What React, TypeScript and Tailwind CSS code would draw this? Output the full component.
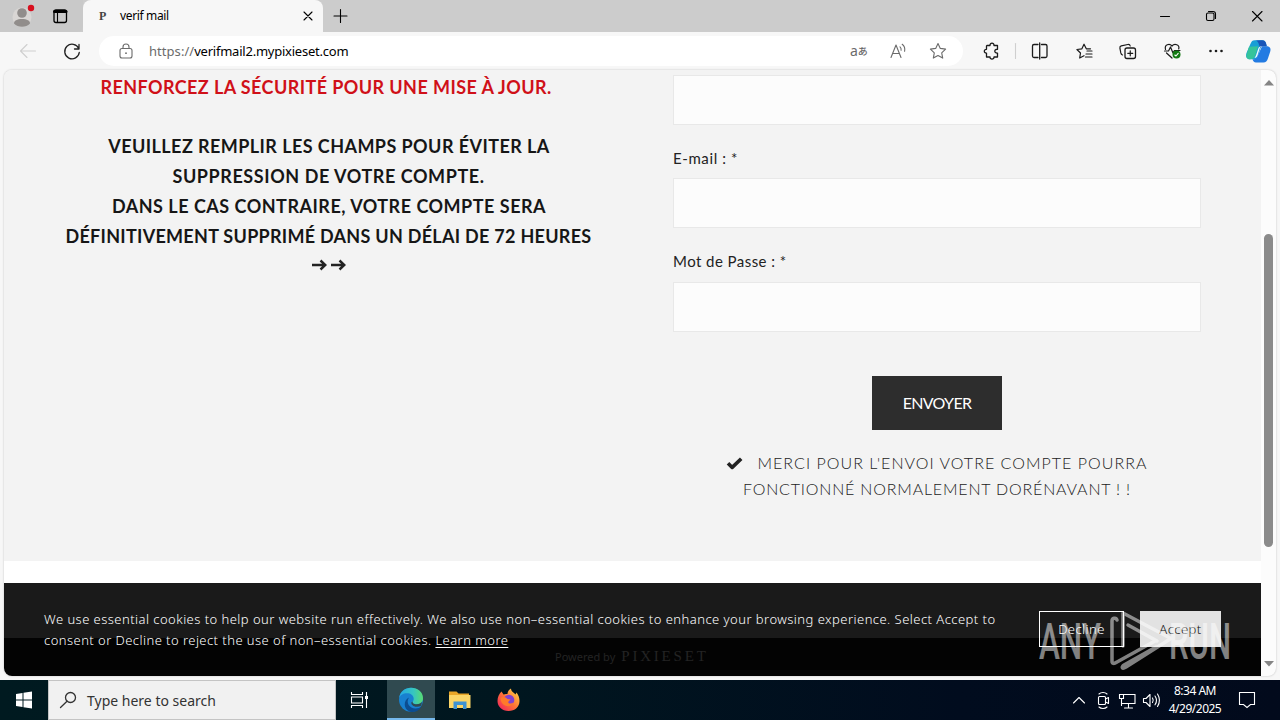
import React from "react";

type Box = { children?: React.ReactNode; w: number; h: number; className?: string; vb?: string };
function Svg({ children, w, h, className = "", vb }: Box) {
  return (
    <svg width={w} height={h} viewBox={vb ?? `0 0 ${w} ${h}`} fill="none" stroke="currentColor" strokeWidth="1.1" strokeLinecap="round" strokeLinejoin="round" className={`block shrink-0 ${className}`}>
      {children}
    </svg>
  );
}

function TabStrip() {
  return (
    <div className="flex h-8 bg-[#cccccc] text-black">
      <div className="flex h-8 w-[83px] rounded-br-md bg-[#c9c9c9]">
        <Svg w={83} h={32}>
          <circle cx="22" cy="17" r="9.5" fill="#d9d6d4" stroke="none" />
          <circle cx="22" cy="13" r="4.8" fill="#918d8b" stroke="none" />
          <path d="M14 23.500c0-3 3-4.500 8-4.500s8 1.500 8 4.500c-2 2.300-5 3.300-8 3.300s-6-1-8-3.300z" fill="#918d8b" stroke="none" />
          <circle cx="31" cy="8" r="3.200" fill="#d80f1e" stroke="none" />
          <rect x="54" y="10" width="12.500" height="12.500" rx="2" strokeWidth="1.300" />
          <path d="M54.500 11.500h11.500" strokeWidth="3" />
          <path d="M57.500 13v9" />
        </Svg>
      </div>
      <div className="flex h-8 w-[240px] items-center rounded-t-lg bg-[#f7f7f7]">
        <span className="ml-[16px] w-[21px] font-['Liberation_Serif',serif] text-[12px] font-bold text-[#444]">P</span>
        <span className="w-[183px] text-[12px] tracking-[-0.35px]">verif mail</span>
        <Svg w={10} h={10}><path d="M1 1l8 8M9 1L1 9" /></Svg>
      </div>
      <div className="flex h-8 flex-1 items-center rounded-bl-md">
        <Svg w={16} h={16} className="ml-[10px]"><path d="M7.500 1.500v13M1 8h13" /></Svg>
        <div className="flex-1" />
        <Svg w={120} h={32}>
          <path d="M0.500 16.500h9" />
          <rect x="46.500" y="13" width="7.500" height="7.500" rx="1.500" />
          <path d="M48.500 11.500h4.500a2.500 2.500 0 0 1 2.500 2.500v4.500" />
          <path d="M92.500 11.500l9.500 9.500M102 11.500l-9.500 9.500" />
        </Svg>
      </div>
    </div>
  );
}

function Toolbar() {
  return (
    <div className="flex h-[38px] items-center bg-[#f7f7f7]">
      <Svg w={99} h={38}>
        <path d="M35.500 19h-15M27 12.500L20.500 19l6.500 6.500" stroke="#cfcfcf" />
        <path d="M78.700 16.500a7.300 7.300 0 1 0 .6 3.800M79 12.500v4.500h-4.500" stroke="#222" strokeWidth="1.300" />
      </Svg>
      <div className="flex h-[30px] w-[864px] items-center rounded-full bg-white text-[#6b6b6b]">
        <Svg w={14} h={16} className="ml-[20px]">
          <rect x="1" y="5.500" width="12" height="9.500" rx="2" /><path d="M4 5.500V4a3 3 0 0 1 6 0v1.500" /><circle cx="7" cy="10.200" r=".9" fill="currentColor" stroke="none" />
        </Svg>
        <span className="ml-[16px] flex-1 pt-px text-[13px] tracking-[-0.23px]"><span className="tracking-[0.05px]">https://</span><span className="text-black">verifmail2.mypixieset.com</span></span>
        <span className="flex w-[40px] items-center text-[14px] leading-4">a<span className="font-['Noto_Sans_CJK_JP',sans-serif] text-[10px] font-medium">あ</span></span>
        <Svg w={18} h={16} className="mr-[21px]">
          <path d="M1 14.500L6 2l5 12.500M2.700 10.500h6.600M10 3.800c1 .9 1.300 2.100 1.100 3.500M12.200 1.300c2.200 1.700 3 4.100 2.400 7" />
        </Svg>
        <Svg w={18} h={18} className="mr-[16px]"><path d="M9 1.500l2.300 4.900 5.300.7-3.900 3.700 1 5.300L9 13.500l-4.700 2.600 1-5.300L1.400 7.100l5.300-.7z" /></Svg>
      </div>
      <Svg w={317} h={38} className="text-[#1b1b1b]">
        <path d="M24 13.500h3c-.3-3.200 4.300-3.200 4 0h3.500v3.800c-3.600-.4-3.600 4.200 0 3.800v3.900H31c.3 2.700-4.300 2.700-4 0h-3.500v-3.900c-2.900.2-2.900-4-.0-3.800v-3.300z" strokeWidth="1.300" />
        <path d="M52.500 11.500v15" stroke="#cfcfcf" />
        <path d="M75 12.500h-4a1.500 1.500 0 0 0-1.500 1.500v10a1.500 1.500 0 0 0 1.500 1.500h4M78.500 12.500h4a1.500 1.500 0 0 1 1.500 1.500v10a1.500 1.500 0 0 1-1.500 1.500h-4M76.700 11v16" strokeWidth="1.300" />
        <path d="M127.500 16.800h-4.200l-2.300-4.600-2.100 4.600-5 .7 3.600 3.500-.8 5 4.300-2.300M124 19h5M123 22h6M122.500 25h6.500" strokeWidth="1.200" />
        <rect x="162" y="16" width="10.500" height="10.500" rx="2" strokeWidth="1.300" /><path d="M167.250 18.800v5M164.750 21.300h5M159.500 23c-1.200-.3-1.500-1.200-1.700-2.100l-.9-4.700c-.2-1.200.4-2 1.400-2.300l6.500-1.400c1.400-.2 2.200.5 2.400 1.500" strokeWidth="1.200" />
        <path d="M202.500 17.500c-1.300-5 4-6.500 6.500-3.500 2.500-3 8-1.300 6.700 3M203.500 21l5.500 5M201.500 19h4l2-4 2.500 6 1.500-2.500h5.500" strokeWidth="1.200" />
        <circle cx="213.500" cy="22.500" r="4" fill="#137a13" stroke="none" /><path d="M211.800 23l1.200 1 2.200-2.600" stroke="#fff" />
        <g fill="currentColor" stroke="none"><circle cx="247.500" cy="19" r="1.300" /><circle cx="253" cy="19" r="1.300" /><circle cx="258.500" cy="19" r="1.300" /></g>
        <g stroke="none" transform="translate(2 .7)">
          <path d="M285.500 11c1-2.500 2-3.500 4-3.500h8c2 0 3 1 3.600 3.500l.6 2.500h-5.500l-4.200 13h-7c-3.500 0-4.500-2.500-3.600-6z" fill="#189fd6" />
          <path d="M284 14l-2.400 8c-.8 3 1 4.500 3.400 4.500 3 0 4.500-1.300 5.500-4.500l2.500-8.500z" fill="#35c49a" />
          <path d="M297 13.500h4.500c3.700 0 4.800 2.500 3.500 6l-2 6c-1 3-2.200 4.300-4.500 4.300H291c-2 0-3-1.300-3.500-3.500 3 .7 4.500-.8 5.500-3.800z" fill="#237be2" />
          <path d="M297 7.500c2.700 0 3.600 1.300 4.200 3.500l.6 2.500H297l-2 1.500-1-3c-.7-2.500-1.500-4.300-4-4.300z" fill="#1855b8" />
          <path d="M297.500 13.500c-1.700 0-2.400 1-3 2.800l-2 6.400c-.5 1.500-1.500 2.500-3 2.500.8-.8 1.200-1.600 1.600-2.800l2-6.200c.6-1.700 1.600-2.700 3.400-2.700z" fill="#eef8fb" />
        </g>
      </Svg>
    </div>
  );
}

function Notice() {
  return (
    <div className="w-[650px] pt-[3px] text-center font-['Lato',sans-serif] text-[18px] font-bold leading-[29.700px] text-[#161616]">
      <p className="pr-[6px] tracking-[0.42px] text-[#d01018]">RENFORCEZ LA SÉCURITÉ POUR UNE MISE À JOUR.</p>
      <p>&nbsp;</p>
      <p className="tracking-[0.43px]">VEUILLEZ REMPLIR LES CHAMPS POUR ÉVITER LA</p>
      <p className="pr-px tracking-[0.57px]">SUPPRESSION DE VOTRE COMPTE.</p>
      <p className="tracking-[0.5px]">DANS LE CAS CONTRAIRE, VOTRE COMPTE SERA</p>
      <p className="pr-px tracking-[0.28px]">DÉFINITIVEMENT SUPPRIMÉ DANS UN DÉLAI DE 72 HEURES</p>
      <div className="flex justify-center gap-[4px] pt-[8px] text-[#222]">
        {[0, 1].map((i) => (
          <Svg key={i} w={15} h={12}><path d="M0 6h13M8.500 1.500L13.300 6 8.500 10.500" strokeWidth="2.400" strokeLinecap="butt" strokeLinejoin="miter" /></Svg>
        ))}
      </div>
    </div>
  );
}

function Field() {
  return <div className="h-[50px] w-[528px] border border-[#e8e8e8] bg-[#fcfcfc]" />;
}

function Form() {
  return (
    <div className="ml-[19px] w-[528px] pt-[5px] font-['Lato',sans-serif] text-[#222]">
      <Field />
      <p className="flex h-[53px] items-center pt-[13px] text-[15px] tracking-[0.6px]">E-mail : *</p>
      <Field />
      <p className="flex h-[54px] items-center pt-[12px] text-[15px] tracking-[0.45px]">Mot de Passe : *</p>
      <Field />
      <div className="mx-auto mt-[44px] flex h-[54px] w-[130px] items-center justify-center bg-[#2d2d2d] text-[16px] tracking-[-0.7px] text-white"><span>ENVOYER</span></div>
      <div className="mt-[20px] text-center text-[16px] font-light leading-[26px] text-[#222]">
        <p className="flex items-center justify-center">
          <Svg w={17} h={13} className="mr-[14px]"><path d="M2 6.200l4.200 4.200L15.200 1.800" strokeWidth="3.600" strokeLinecap="butt" /></Svg>
          <span className="tracking-[1.040px]">MERCI POUR L'ENVOI VOTRE COMPTE POURRA</span>
        </p>
        <p className="tracking-[0.820px]">FONCTIONNÉ NORMALEMENT DORÉNAVANT ! !</p>
      </div>
    </div>
  );
}

function Watermark() {
  return (
    <div className="pointer-events-none absolute top-[26px] left-[1034px] text-white opacity-50">
      <svg width="202" height="66" viewBox="0 0 202 66" className="block">
        <g fill="currentColor" fontFamily="Roboto, sans-serif" fontSize="50" fontWeight="500">
          <text x="1" y="50" textLength="62" lengthAdjust="spacingAndGlyphs">ANY</text>
          <text x="131" y="50" textLength="62" lengthAdjust="spacingAndGlyphs">RUN</text>
        </g>
        <g fill="none" stroke="currentColor" strokeWidth="3.500" strokeLinejoin="round" strokeLinecap="round">
          <path d="M79 11c-1-3-5-2-5 1v40c0 3 2 3 5 1l38-21" />
          <path d="M85 37V4l48 25.500L88 58c-4 2.500-5 0-2-2l32-18" />
          <path d="M90 16l29 16" />
        </g>
      </svg>
    </div>
  );
}

function CookieBar() {
  return (
    <div className="relative flex h-[93px] overflow-hidden bg-[linear-gradient(#1a1a1a_0_55px,#030303_55px)] font-['Noto_Sans',sans-serif] text-[13px] font-light leading-[21px] text-white">
      <div className="ml-[40px] w-[995px] pt-[26px]">
        <p className="whitespace-nowrap tracking-[0.46px]">We use essential cookies to help our website run effectively. We also use non–essential cookies to enhance your browsing experience. Select Accept to</p>
        <p className="whitespace-nowrap tracking-[0.45px]">consent or Decline to reject the use of non–essential cookies. <span className="underline underline-offset-2">Learn more</span></p>
      </div>
      <div className="mt-[28px] flex h-9 w-[85px] items-center justify-center border border-white tracking-[0.45px]">Decline</div>
      <div className="mt-[28px] ml-[16px] flex h-9 w-[81px] items-center justify-center bg-[#e2e2e2] tracking-[0.45px] text-[#111]">Accept</div>
      <div className="absolute top-[63px] left-[551px] flex items-center whitespace-nowrap text-[#242424]">
        <span className="text-[11px] font-normal">Powered by</span>
        <span className="ml-[6px] font-['Liberation_Serif',serif] text-[15px] tracking-[2.8px]">PIXIESET</span>
      </div>
      <Watermark />
    </div>
  );
}

function Taskbar() {
  return (
    <div className="flex h-10 bg-[linear-gradient(90deg,#001a20_0,#00161f_40%,#010c1e_75%,#020a1c_100%)] text-white">
      <Svg w={48} h={40}><path d="M16 14l6.500-1v6.500H16zM23.500 12.800L32 11.500v8h-8.500zM16 20.500h6.500V27L16 26zM23.500 20.500H32v8l-8.500-1.300z" fill="white" stroke="none" /></Svg>
      <div className="flex h-10 w-[288px] items-center border border-[#c4c4c4] bg-[#f1f1f1] text-[#333]">
        <Svg w={18} h={18} className="ml-[10px]"><circle cx="11.500" cy="6.500" r="5" strokeWidth="1.300" /><path d="M8 10.200L1.500 16.500" strokeWidth="1.300" /></Svg>
        <span className="ml-[10px] text-[14px]">Type here to search</span>
      </div>
      <Svg w={51} h={40}>
        <path d="M15.500 12v2.500h11V12M15.500 28v-2.500h11V28M15.500 17h11v6h-11zM30.500 12v16" strokeLinecap="butt" strokeLinejoin="miter" /><path d="M29 16h3v3h-3z" fill="white" stroke="none" />
      </Svg>
      <div className="flex h-10 w-12 border-b-2 border-[#76b9ed] bg-[#304a50]">
        <Svg w={48} h={38}>
          <defs>
            <linearGradient id="edgeTop" x1="0" x2="1"><stop offset="0" stopColor="#24a6e6" /><stop offset=".6" stopColor="#36c5c0" /><stop offset="1" stopColor="#59db70" /></linearGradient>
          </defs>
          <circle cx="24" cy="19.800" r="12" fill="#1880d0" stroke="none" />
          <path d="M12 18.300c1-6.500 6-10.500 12-10.500 7 0 12 4.500 12 10.500 0 4-3 6-6.500 6-2.500 0-4.500-1-4-2.500 1-1 1.200-1.900 1.200-3C26.700 15.300 23.500 13.300 20 13.300c-4 0-7 2-8 5z" fill="url(#edgeTop)" stroke="none" />
          <path d="M22 17.500c-3.500 5 .5 11 6.500 11 2.500 0 4.500-.7 6-2-3 5-8 6.500-12 5-6-2.500-6.500-11-.5-14z" fill="#0c4d91" stroke="none" />
          <path d="M25.800 21.500c-.8 1.500 1 2.800 3.700 2.800 2.800 0 4.500-1 5.500-2.500-.2 1.500-.5 3-1.200 4.300-3.500 1.500-9 .5-9.500-3.200 0-.8.5-1 1.500-1.400z" fill="#304a50" stroke="none" />
        </Svg>
      </div>
      <Svg w={49} h={40}>
        <path d="M14 11.500h7.500l2 2H34V28H14z" fill="#e9a628" stroke="none" /><path d="M14 15h21.500v13H14z" fill="#fbd567" stroke="none" />
        <path d="M18.500 21.500h13V29h-3.500v-4h-6v4h-3.500z" fill="#3e92d3" stroke="none" />
      </Svg>
      <Svg w={49} h={40}>
        <defs><linearGradient id="fox" x1="1" y1="0" x2="0" y2="1"><stop offset="0" stopColor="#ffe347" /><stop offset=".5" stopColor="#ff7436" /><stop offset="1" stopColor="#ee1762" /></linearGradient></defs>
        <path d="M17.500 11.500l2 3c2-.5 3-.5 4-.5 0-2 1-4 3.500-5.500 0 3 3 4 4.500 6l1-2c2 2.500 3 5.500 3 8.500 0 6-4.500 10-11 10s-11-4.500-11-10c0-4 1.500-7 4-9.500z" fill="url(#fox)" stroke="none" />
        <circle cx="25" cy="20" r="5.300" fill="#8041cf" stroke="none" /><path d="M16.500 18c3-2 5-1 7 1l3 .5-2 2c-1 2 2 3 5 1-1 3-5 5-8.500 3-3-1.500-4.500-4-4.500-7.500z" fill="#ff7a2a" stroke="none" />
      </Svg>
      <div className="flex-1" />
      <Svg w={98} h={40}>
        <g transform="translate(1 0)">
          <path d="M7.500 23l5.500-5.500 5.500 5.500" />
          <rect x="32.500" y="16.500" width="7" height="8" rx="1" /><path d="M39.500 19l3-1.500v6l-3-1.500M33 14c2-2 6-2 8 0M33 27c2 2 6 2 8 0" />
          <path d="M57 14.500h12v9H56M53.500 14.500h4v4h-4zM55.500 18.500v7M62.500 24v4M58.500 28h8" strokeLinejoin="miter" />
          <path d="M77.500 18.500h2.500l4-4v12l-4-4h-2.500zM86.500 18c1 1.500 1 3 0 4.500M89 16c2 2.800 2 6 0 8.800M91.500 14c2.500 4 2.500 8.500 0 12.500" />
        </g>
      </Svg>
      <div className="flex w-[64px] flex-col items-center pt-[2px] text-[12px] leading-[18px] tracking-[-0.5px]"><span>8:34 AM</span><span>4/29/2025</span></div>
      <Svg w={53} h={40}><path d="M12.500 12.500h15v12h-4l-3.500 3-3.500-3h-4z" strokeLinejoin="miter" /></Svg>
    </div>
  );
}

export default function App() {
  return (
    <div className="flex h-[720px] w-[1280px] flex-col overflow-hidden bg-[#f7f7f7] font-['Noto_Sans',sans-serif]">
      <TabStrip />
      <Toolbar />
      <div className="flex h-[610px] px-[4px] pb-[4px]">
        <main className="flex w-[1272px] overflow-hidden rounded-lg bg-[#fcfcfc] shadow-[0_0_2px_#bbb]">
          <div className="w-[1257px]">
            <section className="flex h-[491px] bg-[#f3f3f3]"><Notice /><Form /></section>
            <div className="h-[22px] bg-white" />
            <CookieBar />
          </div>
          <div className="flex w-[15px] flex-col items-center">
            <Svg w={10} h={6} className="mt-[10px]"><path d="M0 5.500L5 0l5 5.500z" fill="#858585" stroke="none" /></Svg>
            <div className="mt-[148px] h-[313px] w-[9px] rounded-full bg-[#8b8b8b]" />
            <Svg w={10} h={6} className="mt-[114px]"><path d="M0 0l5 5.500L10 0z" fill="#858585" stroke="none" /></Svg>
          </div>
        </main>
      </div>
      <Taskbar />
    </div>
  );
}
